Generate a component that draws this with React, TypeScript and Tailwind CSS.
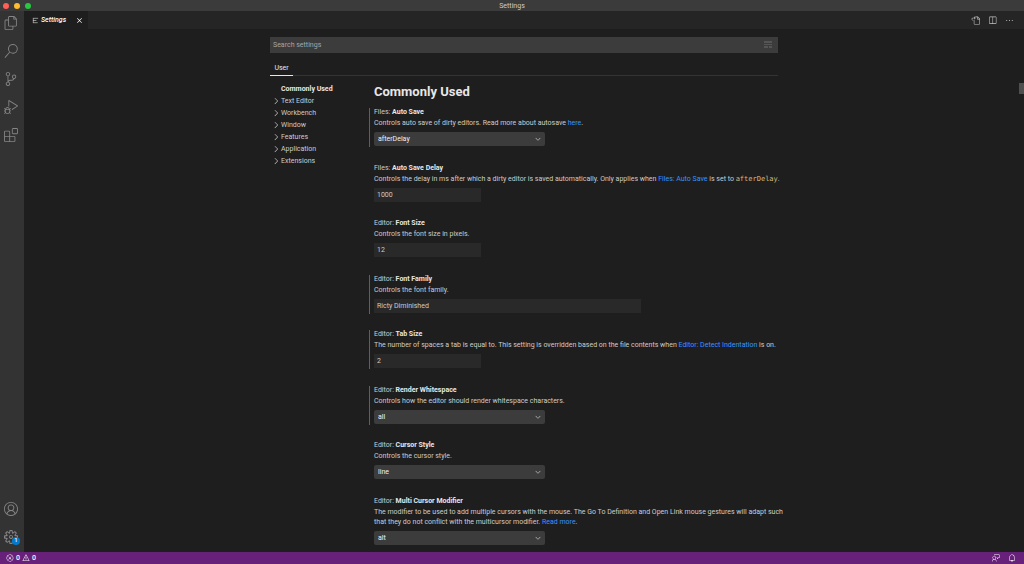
import type { ReactNode } from "react";
import {
  VscAccount,
  VscBell,
  VscChevronDown,
  VscChevronRight,
  VscClose,
  VscDebugAlt,
  VscEllipsis,
  VscError,
  VscExtensions,
  VscFeedback,
  VscFiles,
  VscGoToFile,
  VscSearch,
  VscSettingsGear,
  VscSourceControl,
  VscSplitHorizontal,
  VscWarning,
} from "react-icons/vsc";

type Setting = {
  id: string;
  category: string;
  name: string;
  description: ReactNode;
  type: "select" | "number" | "text";
  value: string;
  options?: string[];
  modified?: boolean;
};

const activities = [
  { label: "Explorer", icon: VscFiles },
  { label: "Search", icon: VscSearch },
  { label: "Source Control", icon: VscSourceControl },
  { label: "Run and Debug", icon: VscDebugAlt },
  { label: "Extensions", icon: VscExtensions },
];

const groups = [
  "Text Editor",
  "Workbench",
  "Window",
  "Features",
  "Application",
  "Extensions",
];

const settings: Setting[] = [
  {
    id: "autoSave",
    category: "Files",
    name: "Auto Save",
    description: (
      <>
        Controls auto save of dirty editors. Read more about autosave{" "}
        <Link>here</Link>.
      </>
    ),
    type: "select",
    value: "afterDelay",
    options: ["off", "afterDelay", "onFocusChange", "onWindowChange"],
    modified: true,
  },
  {
    id: "autoSaveDelay",
    category: "Files",
    name: "Auto Save Delay",
    description: (
      <>
        Controls the delay in ms after which a dirty editor is saved
        automatically. Only applies when <Link>Files: Auto Save</Link> is set
        to{" "}
        <code className="font-['DejaVu_Sans_Mono',monospace] text-[#d7ba7d]">
          afterDelay
        </code>
        .
      </>
    ),
    type: "number",
    value: "1000",
  },
  {
    id: "fontSize",
    category: "Editor",
    name: "Font Size",
    description: "Controls the font size in pixels.",
    type: "number",
    value: "12",
  },
  {
    id: "fontFamily",
    category: "Editor",
    name: "Font Family",
    description: "Controls the font family.",
    type: "text",
    value: "Ricty Diminished",
    modified: true,
  },
  {
    id: "tabSize",
    category: "Editor",
    name: "Tab Size",
    description: (
      <>
        The number of spaces a tab is equal to. This setting is overridden
        based on the file contents when <Link>Editor: Detect Indentation</Link>{" "}
        is on.
      </>
    ),
    type: "number",
    value: "2",
    modified: true,
  },
  {
    id: "renderWhitespace",
    category: "Editor",
    name: "Render Whitespace",
    description:
      "Controls how the editor should render whitespace characters.",
    type: "select",
    value: "all",
    options: ["none", "boundary", "selection", "all"],
    modified: true,
  },
  {
    id: "cursorStyle",
    category: "Editor",
    name: "Cursor Style",
    description: "Controls the cursor style.",
    type: "select",
    value: "line",
    options: ["line", "block", "underline"],
  },
  {
    id: "multiCursor",
    category: "Editor",
    name: "Multi Cursor Modifier",
    description: (
      <>
        The modifier to be used to add multiple cursors with the mouse. The Go
        To Definition and Open Link mouse gestures will adapt such that they do
        not conflict with the multicursor modifier. <Link>Read more</Link>.
      </>
    ),
    type: "select",
    value: "alt",
    options: ["ctrlCmd", "alt"],
  },
];

function Link({ children }: { children: ReactNode }) {
  return (
    <a href="#" className="text-[#3794ff]">
      {children}
    </a>
  );
}

function SettingItem({ setting }: { setting: Setting }) {
  const { id, category, name, description, type, value, options, modified } =
    setting;

  return (
    <div
      className={`border-l pl-1 pb-px ${
        modified ? "border-l-[#0c7d9d]" : "border-l-transparent"
      }`}
    >
      <label htmlFor={id} className="block leading-[8px]">
        {category}:{" "}
        <span className="font-bold text-[#e7e7e7]">{name}</span>
      </label>
      <p className="mt-0.5 leading-[10px]">{description}</p>

      {type === "select" ? (
        <div className="relative mt-1 w-[171px]">
          <select
            id={id}
            defaultValue={value}
            className="block h-3.5 w-full appearance-none rounded-xs bg-[#3c3c3c] px-1 text-[#f0f0f0] outline-none"
          >
            {options?.map((option) => (
              <option key={option}>{option}</option>
            ))}
          </select>
          <VscChevronDown className="pointer-events-none absolute top-[3px] right-[3px] size-2" />
        </div>
      ) : (
        <input
          id={id}
          type="text"
          inputMode={type === "number" ? "numeric" : "text"}
          defaultValue={value}
          className={`mt-1 block h-3.5 bg-[#292929] px-[3px] outline-none ${
            type === "number" ? "w-[107px]" : "w-[267px]"
          }`}
        />
      )}
    </div>
  );
}

export default function App() {
  return (
    <div className="flex h-screen flex-col overflow-hidden bg-[#1e1e1e] font-[Roboto,sans-serif] text-[7px] text-[#cccccc]">
      {/* Title bar */}
      <header className="grid h-[11px] shrink-0 grid-cols-3 items-center bg-[#3b3b3b]">
        <div className="flex gap-[5px] pl-[3px]">
          <span className="size-1.5 rounded-full bg-[#ff5f57]" />
          <span className="size-1.5 rounded-full bg-[#febc2e]" />
          <span className="size-1.5 rounded-full bg-[#28c840]" />
        </div>
        <span className="text-center leading-[10px]">Settings</span>
      </header>

      <div className="flex min-h-0 flex-1">
        {/* Activity bar */}
        <nav className="flex w-6 shrink-0 flex-col items-center justify-between bg-[#333333] pr-0.5 pb-2 text-[#858585]">
          <div className="flex flex-col gap-3.5 pt-[5px]">
            {activities.map(({ label, icon: Icon }) => (
              <button key={label} aria-label={label}>
                <Icon className="size-3.5" />
              </button>
            ))}
          </div>
          <div className="flex flex-col gap-3.5">
            <button aria-label="Accounts">
              <VscAccount className="size-3.5" />
            </button>
            <button aria-label="Manage" className="relative">
              <VscSettingsGear className="size-3.5" />
              <span className="absolute -right-0.5 -bottom-px flex size-2 items-center justify-center rounded-full bg-[#007acc] text-[5px] font-semibold text-white">
                1
              </span>
            </button>
          </div>
        </nav>

        <main className="flex min-w-0 flex-1 flex-col">
          {/* Editor tabs */}
          <div className="flex h-[18px] shrink-0 items-center justify-between bg-[#252526]">
            <div className="flex h-full w-16 items-center bg-[#1e1e1e] pl-2 text-white">
              <svg
                viewBox="0 0 16 16"
                className="size-[7px] text-[#cccccc]"
                fill="none"
                stroke="currentColor"
                strokeWidth="1.5"
              >
                <path d="M2 3h12M2 8h8M2 13h11M3 3v10" />
              </svg>
              <span className="ml-0.5 font-medium italic">Settings</span>
              <button aria-label="Close" className="ml-auto mr-1">
                <VscClose className="size-[9px]" />
              </button>
            </div>
            <div className="flex items-center gap-2 pr-2.5 text-[#c5c5c5]">
              <button aria-label="Open Settings (JSON)">
                <VscGoToFile className="size-[9px]" />
              </button>
              <button aria-label="Split Editor Right">
                <VscSplitHorizontal className="size-[9px]" />
              </button>
              <button aria-label="More Actions">
                <VscEllipsis className="size-[9px]" />
              </button>
            </div>
          </div>

          <div className="relative flex min-h-0 flex-1 flex-col pt-2">
            <div className="mx-auto flex min-h-0 w-full max-w-[508px] flex-1 flex-col">
              <div className="relative">
                <input
                  type="text"
                  aria-label="Search settings"
                  placeholder="Search settings"
                  className="block h-4 w-full bg-[#3c3c3c] px-[3px] outline-none placeholder:text-[#a6a6a6]"
                />
                <svg
                  viewBox="0 0 8 7"
                  className="absolute top-1 right-1.5 h-[7px] w-2"
                  fill="#555555"
                >
                  <path d="M0 0h8v2H0zM0 3h8v1H0zM0 5h4v2H0zM5 5h3v2H5z" />
                </svg>
              </div>

              <div className="mt-2 flex h-[15px] border-b border-[#343434]">
                <button className="-mb-px flex h-[15px] w-[23px] items-center justify-center border-b border-[#e7e7e7] text-[#e7e7e7]">
                  User
                </button>
              </div>

              <div className="flex min-h-0 flex-1">
                {/* Table of contents */}
                <ul className="w-[99px] shrink-0 pt-[7px]">
                  <li className="flex h-3 items-center pl-[11px] font-bold text-[#e7e7e7]">
                    Commonly Used
                  </li>
                  {groups.map((group) => (
                    <li key={group} className="flex h-3 items-center pl-px">
                      <VscChevronRight className="size-2.5" />
                      {group}
                    </li>
                  ))}
                </ul>

                {/* Settings list */}
                <section className="-mr-2 flex min-w-0 flex-1 flex-col pt-2 pb-1.5">
                  <h1 className="mb-2 pl-[5px] text-[13px] leading-[16px] font-bold text-[#e7e7e7]">
                    Commonly Used
                  </h1>
                  <div className="flex flex-1 flex-col justify-between">
                    {settings.map((setting) => (
                      <SettingItem key={setting.id} setting={setting} />
                    ))}
                  </div>
                </section>
              </div>
            </div>

            {/* Scrollbar */}
            <div className="absolute top-[54px] right-0 h-[11px] w-[5px] bg-[#4f4f4f]" />
          </div>
        </main>
      </div>

      {/* Status bar */}
      <footer className="flex h-3 shrink-0 items-center justify-between bg-[#68217a] px-1.5 text-white">
        <button className="flex items-center gap-0.5 font-medium">
          <VscError className="size-2" />0
          <VscWarning className="size-2" />0
        </button>
        <div className="flex items-center gap-2 pr-0.5">
          <button aria-label="Tweet Feedback">
            <VscFeedback className="size-2" />
          </button>
          <button aria-label="Notifications">
            <VscBell className="size-2" />
          </button>
        </div>
      </footer>
    </div>
  );
}
